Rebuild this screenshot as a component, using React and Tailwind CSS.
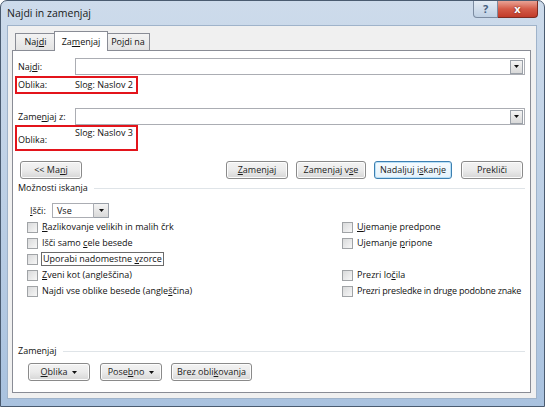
import React from "react";

function U({ children }) {
  return <span className="underline underline-offset-[1px]">{children}</span>;
}

function Caret() {
  return (
    <svg width="5" height="3" viewBox="0 0 5 3">
      <path d="M0 0h5L2.5 3z" fill="#111" />
    </svg>
  );
}

function DropBtn({ className = "" }) {
  return (
    <div
      className={
        "flex items-center justify-center border border-[#9aa0a8] bg-gradient-to-b from-[#f4f4f4] to-[#d9d9d9] " +
        className
      }
    >
      <Caret />
    </div>
  );
}

function Btn({ children, className = "", focus }) {
  return (
    <div
      className={
        "flex h-[18px] items-center justify-center whitespace-nowrap rounded-[3px] border text-[9px] text-[#1b1b1b] " +
        (focus
          ? "border-[#3c7fb1] bg-gradient-to-b from-[#f6fbfe] to-[#e4f2fb] shadow-[inset_0_0_0_1px_#b9e0f7] "
          : "border-[#8a8a8a] bg-gradient-to-b from-[#f3f3f3] via-[#ebebeb] to-[#d6d6d6] shadow-[inset_0_0_0_1px_#fcfcfc] ") +
        className
      }
    >
      {children}
    </div>
  );
}

function Check({ children }) {
  return (
    <div className="flex items-center whitespace-nowrap">
      <div className="h-[11px] w-[11px] shrink-0 border border-[#a0a3a6] bg-gradient-to-br from-[#d9dadb] to-[#f7f7f7]" />
      <div className="ml-[4px]">{children}</div>
    </div>
  );
}

function Section({ label, className = "" }) {
  return (
    <div className={"flex h-[12px] items-center " + className}>
      <span>{label}</span>
      <div className="ml-[6px] h-px flex-1 bg-[#dfe4e8]" />
    </div>
  );
}

export default function App() {
  return (
    <div className="h-[407px] w-[545px] overflow-hidden rounded-t-[7px] border border-[#4a5b70] bg-gradient-to-b from-[#cddbeb] via-[#bccfe5] to-[#a9c2df] font-['Open_Sans','Noto_Sans',sans-serif] text-[9px] leading-[12px] text-[#111]">
      {/* title bar */}
      <div className="flex h-[24px] items-start justify-between">
        <div className="ml-[6px] mt-[6px] text-[10.5px] text-[#1a1a1a]">
          Najdi in zamenjaj
        </div>
        <div className="mr-[6px] flex">
          <div className="flex h-[17px] w-[25px] items-center justify-center rounded-bl-[4px] border border-t-0 border-[#7b8ba0] bg-gradient-to-b from-[#e3ebf4] to-[#bfd0e3] text-[11px] font-bold text-[#45607f]">
            ?
          </div>
          <div className="flex h-[17px] w-[40px] items-center justify-center rounded-br-[4px] border border-l-0 border-t-0 border-[#7d2b21] bg-gradient-to-b from-[#e9a295] via-[#d45a47] to-[#c13b29] text-[11px] font-bold text-white [text-shadow:0_0_2px_#5a1a10]">
            x
          </div>
        </div>
      </div>

      {/* client area */}
      <div className="ml-[6px] h-[374px] w-[530px] border border-[#9fb3ca] bg-[#f0f0f0] pt-[5px]">
        {/* tabs */}
        <div className="ml-[7px] flex h-[19px] items-end">
          <div className="flex h-[17px] w-[41px] items-center justify-center border border-b-0 border-[#898c95] bg-gradient-to-b from-[#f3f3f3] to-[#e3e3e3]">
            Naj<U>d</U>i
          </div>
          <div className="relative z-10 -mx-[2px] -mb-px flex h-[20px] w-[54px] items-center justify-center border border-b-0 border-[#898c95] bg-white">
            Za<U>m</U>enjaj
          </div>
          <div className="flex h-[17px] w-[44px] items-center justify-center border border-b-0 border-[#898c95] bg-gradient-to-b from-[#f3f3f3] to-[#e3e3e3]">
            Po<U>j</U>di na
          </div>
        </div>

        {/* panel */}
        <div className="ml-[4px] flex h-[343px] w-[519px] flex-col border border-[#898c95] bg-white pl-[5px] pr-[5px]">
          <div className="mt-[7px] flex h-[17px] items-center">
            <div className="w-[57px]">
              Naj<U>d</U>i:
            </div>
            <div className="flex h-[17px] flex-1 items-center justify-end border border-[#abadb3] bg-white pr-[1px]">
              <DropBtn className="h-[14px] w-[13px]" />
            </div>
          </div>

          <div className="-ml-[3px] mt-[1px] flex h-[18px] w-[123px] items-center border-2 border-[#e3141b] pl-[1px]">
            <div className="w-[57px]">Oblika:</div>
            <div>Slog: Naslov 2</div>
          </div>

          <div className="mt-[14px] flex h-[17px] items-center">
            <div className="w-[57px]">
              Zame<U>n</U>jaj z:
            </div>
            <div className="flex h-[17px] flex-1 items-center justify-end border border-[#abadb3] bg-white pr-[1px]">
              <DropBtn className="h-[14px] w-[13px]" />
            </div>
          </div>

          <div className="-ml-[3px] flex h-[26px] w-[123px] items-start border-2 border-[#e3141b] pl-[1px]">
            <div className="mt-[7px] w-[57px]">Oblika:</div>
            <div>Slog: Naslov 3</div>
          </div>

          <div className="mt-[10px] flex">
            <Btn className="ml-[2px] w-[62px]">
              &lt;&lt; Ma<U>n</U>j
            </Btn>
            <Btn className="ml-[144px] w-[62px]">
              <U>Z</U>amenjaj
            </Btn>
            <Btn className="ml-[8px] w-[70px]">
              Zamenjaj v<U>s</U>e
            </Btn>
            <Btn className="ml-[8px] w-[78px]" focus>
              Nadaljuj i<U>s</U>kanje
            </Btn>
            <Btn className="ml-[9px] w-[62px]">Prekliči</Btn>
          </div>

          <Section label="Možnosti iskanja" className="mt-[3px]" />

          <div className="mt-[9px] flex h-[15px] items-center pl-[12px]">
            <div className="w-[22px]">
              <U>I</U>šči:
            </div>
            <div className="flex h-[15px] w-[42px] items-center border border-[#abadb3] bg-white pl-[4px]">
              Vse
            </div>
            <DropBtn className="h-[15px] w-[15px] border-l-0" />
          </div>

          <div className="mt-[1px] grid grid-cols-[315px_1fr] auto-rows-[16px] pl-[9px]">
            <Check>
              <U>R</U>azlikovanje velikih in malih črk
            </Check>
            <Check>
              <U>U</U>jemanje predpone
            </Check>
            <Check>
              Išči samo <U>c</U>ele besede
            </Check>
            <Check>
              Ujemanje <U>p</U>ripone
            </Check>
            <div className="flex items-center">
              <div className="h-[11px] w-[11px] border border-[#a0a3a6] bg-gradient-to-br from-[#d9dadb] to-[#f7f7f7]" />
              <div className="ml-[3px] border border-[#6b6b6b] px-[1px] leading-[12px]">
                Uporabi nadomestne <U>v</U>zorce
              </div>
            </div>
            <div />
            <Check>
              <U>Z</U>veni kot (angleščina)
            </Check>
            <Check>
              Prezri lo<U>č</U>ila
            </Check>
            <Check>
              Najdi vse oblike besede (angle<U>š</U>čina)
            </Check>
            <Check>
              <span className="tracking-[-0.2px]">Prezri presledke in druge podobne znake</span>
            </Check>
          </div>

          <Section label="Zamenjaj" className="mt-[46px]" />

          <div className="mt-[6px] flex pl-[10px]">
            <Btn className="w-[62px] gap-[5px]">
              <span>
                <U>O</U>blika
              </span>
              <Caret />
            </Btn>
            <Btn className="ml-[10px] w-[62px] gap-[5px]">
              <span>
                Pose<U>b</U>no
              </span>
              <Caret />
            </Btn>
            <Btn className="ml-[9px] w-[81px]">
              Brez obli<U>k</U>ovanja
            </Btn>
          </div>
        </div>
      </div>
    </div>
  );
}
